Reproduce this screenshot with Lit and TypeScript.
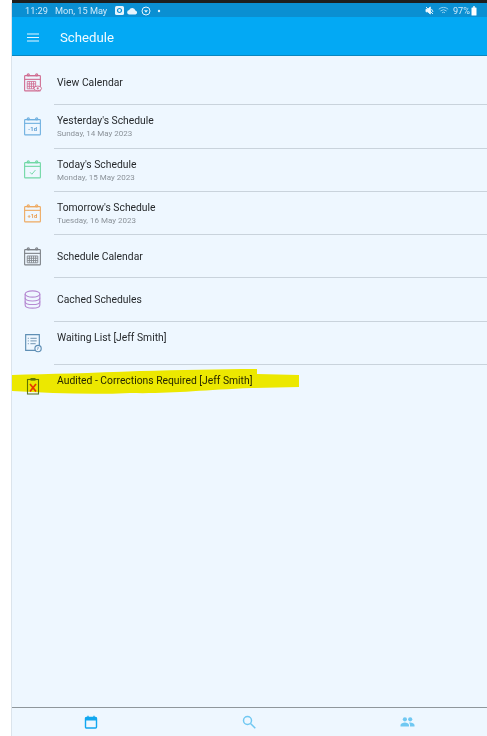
import { LitElement, html, css, svg } from "lit";
import { customElement } from "lit/decorators.js";

const cal = (color: string, inner: unknown) => svg`<svg class="ic" viewBox="0 0 20 20" width="21" height="21" fill="none" stroke=${color} stroke-width="1.050">
  <rect x="2.500" y="3.500" width="15" height="14.500" rx="0.600"/><path d="M2.500 7h15"/>
  <circle cx="6" cy="2.800" r="1"/><circle cx="14" cy="2.800" r="1"/><path d="M7 3.500h6" />${inner}</svg>`;

const small = (color: string, t: string) =>
  svg`<text x="10" y="14.300" text-anchor="middle" font-size="5.600" font-weight="700" font-family="Roboto, sans-serif" fill=${color} stroke="none">${t}</text>`;

const grid = (x: number, y: number, w: number, h: number, nx: number, ny: number) => {
  let d = `M${x} ${y}h${w}v${h}h${-w}z`;
  for (let i = 1; i < nx; i++) d += `M${x + (w * i) / nx} ${y}v${h}`;
  for (let i = 1; i < ny; i++) d += `M${x} ${y + (h * i) / ny}h${w}`;
  return d;
};

const icons = {
  view: cal("#d06d92", svg`
    <path d=${grid(5, 9, 8, 7, 4, 3)} stroke-width="0.800"/>
    <ellipse cx="15" cy="15.600" rx="3.600" ry="2.200" fill="#f0f7ff" stroke-width="0.900"/><circle cx="15" cy="15.600" r="1" fill="#d06d92" stroke="none"/>`),
  yesterday: cal("#6fb0e0", small("#5f9fd4", "-1d")),
  today: cal("#70d8a5", svg`<path d="M7.600 12.600l1.800 1.900 3.400-4" stroke-width="0.900"/>`),
  tomorrow: cal("#eeaa62", small("#eb9f52", "+1d")),
  calendar: cal("#7d8288", svg`<path d=${grid(5, 9.500, 10, 6.500, 5, 3)} stroke-width="0.800"/>`),
  cached: svg`<svg class="ic" viewBox="0 0 20 20" width="21" height="21" fill="none" stroke="#b68ad2" stroke-width="1.100">
    <ellipse cx="10" cy="4.800" rx="7" ry="3"/><path d="M3 4.800v10.400c0 1.700 3.100 3 7 3s7-1.300 7-3V4.800"/>
    <path d="M3 8.400c0 1.700 3.100 3 7 3s7-1.300 7-3M3 11.800c0 1.700 3.100 3 7 3s7-1.300 7-3"/></svg>`,
  waiting: svg`<svg class="ic" viewBox="0 0 20 20" width="21" height="21" fill="none" stroke="#5f8fb5" stroke-width="1.100">
    <path d="M13.500 17.500H3.500V2.500h13v10"/>
    <path d="M5.500 6h1M5.500 8.500h1M5.500 11h1M8 6h6M8 8.500h6M8 11h5" stroke="#8aa9c2"/>
    <circle cx="15.300" cy="15.800" r="3" fill="#f0f7ff"/><path d="M15.300 14.200v1.700l-1 .8" stroke-width="0.800"/></svg>`,
  audited: svg`<svg class="ic" viewBox="0 0 20 20" width="20" height="20" fill="none">
    <rect x="4.500" y="3.500" width="11" height="14.500" stroke="#5e7a2a" stroke-width="1.100"/>
    <rect x="7.500" y="2" width="5" height="2.600" fill="#5e7a2a"/>
    <path d="M7 8l6 7.500M13 8l-6 7.500" stroke="#e8402a" stroke-width="1.800"/></svg>`,
};

const rows = [
  { icon: icons.view, title: "View Calendar", mode: "center" },
  { icon: icons.yesterday, title: "Yesterday's Schedule", sub: "Sunday, 14 May 2023" },
  { icon: icons.today, title: "Today's Schedule", sub: "Monday, 15 May 2023" },
  { icon: icons.tomorrow, title: "Tomorrow's Schedule", sub: "Tuesday, 16 May 2023" },
  { icon: icons.calendar, title: "Schedule Calendar", mode: "center" },
  { icon: icons.cached, title: "Cached Schedules", mode: "center" },
  { icon: icons.waiting, title: "Waiting List [Jeff Smith]" },
  { icon: icons.audited, title: "Audited - Corrections Required [Jeff Smith]", last: true },
];

@customElement("app-root")
export class AppRoot extends LitElement {
  static styles = css`
    :host { display: block; height: 736px; background: #fff; font-family: Roboto, "Liberation Sans", sans-serif; }
    .topline { height: 3px; background: #1e1e1e; margin-left: 12px; }
    .frame { height: 733px; margin-left: 12px; display: flex; flex-direction: column; background: #eef7ff;
      box-shadow: -1px 0 0 #dbe4ec; position: relative; overflow: hidden; }
    .status { height: 14px; background: #0a8fd2; color: #cfeafb; font-size: 9.200px; display: flex; align-items: center;
      padding: 1px 10px 0 13px; flex: none; box-sizing: border-box; }
    .status .date { margin-left: 7px; }
    .status .sicons { display: flex; gap: 3px; margin-left: 8px; align-items: center; }
    .status .right { margin-left: auto; display: flex; gap: 4px; align-items: center; }
    .bar { height: 36px; padding-top: 2px; background: #03a9f4; border-bottom: 1px solid #0a87bf; display: flex; align-items: center;
      color: #f2fbff; font-size: 13.200px; flex: none; padding-left: 15px; gap: 21px; box-sizing: content-box; }
    .bar span { margin-top: 1px; }
    .list { flex: 1; position: relative; display: flex; flex-direction: column; }
    .row { height: 43.300px; flex: none; display: flex; box-sizing: border-box; position: relative; }
    .row.first { height: 49.300px; }
    .iconbox { width: 42px; flex: none; display: flex; justify-content: center; align-items: center; padding: 0 1px 1px 0; box-sizing: border-box; }
    .row.first .iconbox { padding: 4px 1px 0 0; }
    .ic { display: block; }
    .body { flex: 1; border-bottom: 1.500px solid #c9d3dc; display: flex; flex-direction: column; padding-top: 9px; color: #26292c; min-width: 0; position: relative; padding-left: 3px; }
    .row.last .body { border-bottom: none; }
    .row.center .body { justify-content: center; padding-top: 1.500px; }
    .row.first .body { padding-top: 5px; }
    .title { font-size: 10.340px; line-height: 14px; white-space: nowrap; }
    .sub { font-size: 8px; line-height: 11px; color: #8b9299; white-space: nowrap; }
    .mark { position: absolute; left: -12px; top: 312px; mix-blend-mode: multiply; pointer-events: none; }
    .tabs { height: 28px; flex: none; border-top: 1px solid #8f979c; display: grid; grid-template-columns: repeat(3, 1fr); align-items: center; justify-items: center; }
  `;

  render() {
    return html`
      <div class="topline"></div>
      <div class="frame">
        <div class="status">
          <span>11:29</span><span class="date">Mon, 15 May</span>
          <span class="sicons">
            <svg width="9" height="9" viewBox="0 0 9 9"><rect width="9" height="9" rx="1.500" fill="#e6f4fd"/><circle cx="4.500" cy="4.500" r="2" fill="none" stroke="#0a8fd2" stroke-width="1.200"/></svg>
            <svg width="11" height="8" viewBox="0 0 11 8"><path d="M2.500 7.500a2.200 2.200 0 0 1-.3-4.400 3.300 3.300 0 0 1 6.200.3 2.100 2.100 0 0 1 .1 4.100z" fill="#e6f4fd"/></svg>
            <svg width="10" height="10" viewBox="0 0 10 10"><circle cx="5" cy="5" r="4" fill="none" stroke="#e6f4fd"/><path d="M3 4.300h4L5 6.800z" fill="#e6f4fd"/></svg>
            <svg width="6" height="6" viewBox="0 0 6 6" style="margin-left:2px"><circle cx="3" cy="3" r="1.200" fill="#e6f4fd"/></svg>
          </span>
          <span class="right">
            <svg width="9" height="9" viewBox="0 0 9 9"><path d="M1 3.200h1.800L5.300 1v7L2.800 5.800H1zM1 1l7 7M6.500 3l1.500 3" stroke="#f2faff" fill="#f2faff" stroke-width="0.900"/></svg>
            <svg width="11" height="9" viewBox="0 0 11 9" fill="none" stroke="#8fd0f2" stroke-width="1"><path d="M.8 3.200a7 7 0 0 1 9.400 0M2.400 5a4.700 4.700 0 0 1 6.200 0M4 6.800a2.200 2.200 0 0 1 3 0"/></svg>
            <span>97%</span>
            <svg width="6" height="10" viewBox="0 0 6 10" style="margin-left:-3px"><rect x="0.500" y="1.500" width="5" height="8" rx="0.600" fill="#fff"/><rect x="2" y="0.300" width="2" height="1.400" fill="#fff"/></svg>
          </span>
        </div>
        <div class="bar">
          <svg width="12" height="9" viewBox="0 0 12 9" stroke="#e8f7ff" stroke-width="1.100"><path d="M0 1h12M0 4.500h12M0 8h12"/></svg>
          <span>Schedule</span>
        </div>
        <div class="list">
          ${rows.map((r, i) => html`
            <div class="row ${r.mode ?? ""} ${i === 0 ? "first" : ""} ${r.last ? "last" : ""}">
              <div class="iconbox">${r.icon}</div>
              <div class="body">
                <div class="title">${r.title}</div>
                ${r.sub ? html`<div class="sub">${r.sub}</div>` : ""}
              </div>
            </div>`)}
          <svg class="mark" width="300" height="30" viewBox="0 0 300 30">
            <path d="M12 7C50 6 90 5 140 3C180 2 220 1 257 1L257 6L299 7L299 19L252 20C200 22 170 26 130 25C90 27 50 25 12 23Z" fill="#fdf000"/>
          </svg>
        </div>
        <div class="tabs">
          <svg width="14" height="14" viewBox="0 0 14 14" fill="none"><rect x="1.500" y="2.500" width="11" height="10.500" rx="1" stroke="#11a7ef" stroke-width="1.400"/><path d="M1.500 2.500h11v3h-11z" fill="#11a7ef"/><path d="M4 .7v2M10 .7v2" stroke="#11a7ef" stroke-width="1.300"/></svg>
          <svg width="14" height="14" viewBox="0 0 14 14" fill="none" stroke="#70c8f2" stroke-width="1.500"><circle cx="5.500" cy="5.500" r="4"/><path d="M8.500 8.500l4.800 4.800"/></svg>
          <svg width="15" height="10" viewBox="0 0 15 10" fill="#70c8f2"><circle cx="4.900" cy="2.300" r="2.100"/><circle cx="10.200" cy="2.300" r="2.100"/><path d="M.5 9.500V8c0-1.500 2.600-2.400 4.400-2.400S9 6.500 9 8v1.500zM10 9.500V8c0-.9-.3-1.700-1-2.300.4-.1.900-.1 1.200-.1 1.800 0 4.300.9 4.300 2.400v1.500z"/></svg>
        </div>
      </div>
    `;
  }
}
